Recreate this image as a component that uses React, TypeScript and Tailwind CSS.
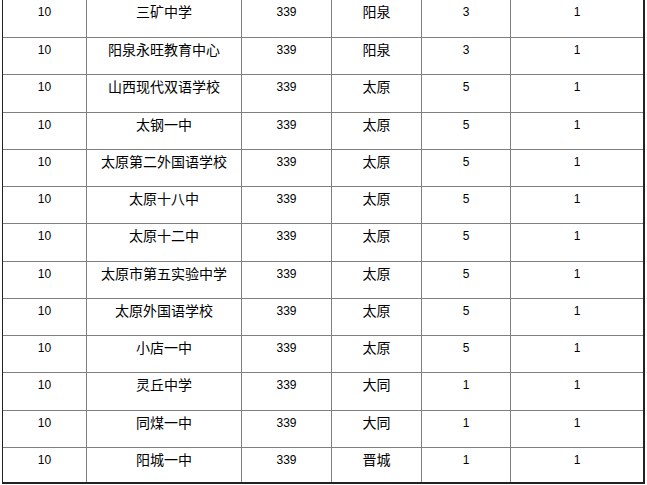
const rows = [
  { school: "三矿中学", city: "阳泉", n: "3", h: "h-[38px]" },
  { school: "阳泉永旺教育中心", city: "阳泉", n: "3", h: "h-[37px]" },
  { school: "山西现代双语学校", city: "太原", n: "5", h: "h-[38px]" },
  { school: "太钢一中", city: "太原", n: "5", h: "h-[37px]" },
  { school: "太原第二外国语学校", city: "太原", n: "5", h: "h-[37px]" },
  { school: "太原十八中", city: "太原", n: "5", h: "h-[37px]" },
  { school: "太原十二中", city: "太原", n: "5", h: "h-[38px]" },
  { school: "太原市第五实验中学", city: "太原", n: "5", h: "h-[37px]" },
  { school: "太原外国语学校", city: "太原", n: "5", h: "h-[37px]" },
  { school: "小店一中", city: "太原", n: "5", h: "h-[37px]" },
  { school: "灵丘中学", city: "大同", n: "1", h: "h-[38px]" },
  { school: "同煤一中", city: "大同", n: "1", h: "h-[37px]" },
  { school: "阳城一中", city: "晋城", n: "1", h: "h-[34px]" },
];

const cell = "flex justify-center pt-[2px] leading-[20px] border-r border-[#808080]";

export default function App() {
  return (
    <div className="w-[647px] h-[485px] bg-white overflow-hidden text-black font-['Liberation_Sans','Noto_Sans_CJK_SC',sans-serif]">
      <div className="ml-[2px] w-[643px] border-l border-r-2 border-b-2 border-[#222]">
        {rows.map((r, i) => (
          <div
            key={i}
            className={`flex ${r.h} ${i < rows.length - 1 ? "border-b border-[#808080]" : ""}`}
          >
            <div className={`${cell} w-[84px] text-[12px]`}>10</div>
            <div className={`${cell} w-[155px] text-[14px]`}>{r.school}</div>
            <div className={`${cell} w-[90px] text-[12px]`}>339</div>
            <div className={`${cell} w-[90px] text-[14px]`}>{r.city}</div>
            <div className={`${cell} w-[89px] text-[12px]`}>{r.n}</div>
            <div className="flex justify-center pt-[2px] leading-[20px] w-[132px] text-[12px]">1</div>
          </div>
        ))}
      </div>
    </div>
  );
}
